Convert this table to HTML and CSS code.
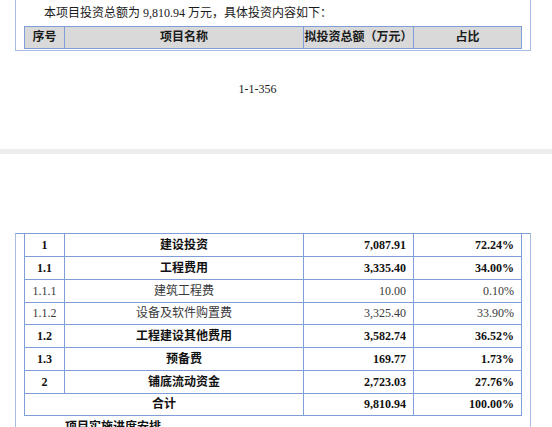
FILE: index.html
```html
<!DOCTYPE html>
<html lang="zh">
<head>
<meta charset="utf-8">
<link rel="stylesheet" href="styles.css">
</head>
<body>
<div class="sheet sheet-top">
  <p class="intro">本项目投资总额为 9,810.94 万元，具体投资内容如下：</p>
  <table class="grid head-grid">
    <colgroup><col class="c1"><col class="c2"><col class="c3"><col class="c4"></colgroup>
    <tr class="head">
      <th>序号</th><th>项目名称</th><th>拟投资总额（万元）</th><th>占比</th>
    </tr>
  </table>
</div>
<div class="page-no">1-1-356</div>
<div class="page-gap"></div>
<div class="sheet sheet-bottom">
  <table class="grid body-grid">
    <colgroup><col class="c1"><col class="c2"><col class="c3"><col class="c4"></colgroup>
    <tr class="b"><td class="n">1</td><td class="name">建设投资</td><td class="num">7,087.91</td><td class="num">72.24%</td></tr>
    <tr class="b"><td class="n">1.1</td><td class="name">工程费用</td><td class="num">3,335.40</td><td class="num">34.00%</td></tr>
    <tr class="r"><td class="n">1.1.1</td><td class="name">建筑工程费</td><td class="num">10.00</td><td class="num">0.10%</td></tr>
    <tr class="r short"><td class="n">1.1.2</td><td class="name">设备及软件购置费</td><td class="num">3,325.40</td><td class="num">33.90%</td></tr>
    <tr class="b"><td class="n">1.2</td><td class="name">工程建设其他费用</td><td class="num">3,582.74</td><td class="num">36.52%</td></tr>
    <tr class="b"><td class="n">1.3</td><td class="name">预备费</td><td class="num">169.77</td><td class="num">1.73%</td></tr>
    <tr class="b"><td class="n">2</td><td class="name">铺底流动资金</td><td class="num">2,723.03</td><td class="num">27.76%</td></tr>
    <tr class="b short"><td class="name" colspan="2">合计</td><td class="num">9,810.94</td><td class="num">100.00%</td></tr>
  </table>
  <p class="next-title">项目实施进度安排</p>
</div>
</body>
</html>
```
FILE: styles.css
```css
html, body {
  margin: 0;
  padding: 0;
  background: #ffffff;
}
body {
  width: 552px;
  height: 427px;
  overflow: hidden;
  font-family: "Liberation Serif", "Noto Sans CJK SC", serif;
  color: #111;
  font-size: 12px;
}
.sheet {
  margin: 0 21px 0 15px;
  border-left: 1px solid #a9bce4;
  border-right: 1px solid #a9bce4;
  padding: 0 9px 0 8px;
}
.sheet-top {
  border-bottom: 1px solid #a9bce4;
  padding-bottom: 1px;
}
.sheet-bottom {
  border-top: 1px solid #7f9dd6;
  margin-top: 79px;
  height: 193px;
  overflow: hidden;
}
.intro {
  margin: 0;
  padding: 2px 0 0 20px;
  line-height: 22px;
  font-size: 12px;
  color: #1a1a1a;
}
.grid {
  width: 497px;
  table-layout: fixed;
  border-collapse: collapse;
}
.c1 { width: 40px; }
.c2 { width: 239px; }
.c3 { width: 110px; }
.c4 { width: 108px; }
.head-grid {
  margin-top: 2px;
}
.grid th, .grid td {
  border: 1px solid #7f9dd6;
  padding: 0;
  height: 22px;
  line-height: 22px;
  font-size: 12px;
  white-space: nowrap;
  overflow: hidden;
}
.head th {
  background: #d9d9d9;
  font-weight: bold;
  text-align: center;
  height: 21px;
  line-height: 21px;
  color: #1a1a1a;
}
.body-grid tr:first-child td {
  border-top: none;
}
.body-grid tr.short td {
  height: 21px;
  line-height: 21px;
}
.grid td.n, .grid td.name {
  text-align: center;
}
.grid td.num {
  text-align: right;
  padding-right: 7px;
}
.b td {
  font-weight: bold;
  color: #111;
}
.r td {
  font-weight: normal;
  color: #3a3a3a;
}
.page-no {
  margin-top: 30px;
  padding-right: 37px;
  text-align: center;
  line-height: 16px;
  font-size: 12px;
  color: #1a1a1a;
}
.page-gap {
  margin-top: 52px;
  height: 5px;
  background: #ededed;
}
.next-title {
  margin: 3px 0 0 0;
  padding-left: 41px;
  font-weight: bold;
  line-height: 16px;
  font-size: 12px;
}
```
